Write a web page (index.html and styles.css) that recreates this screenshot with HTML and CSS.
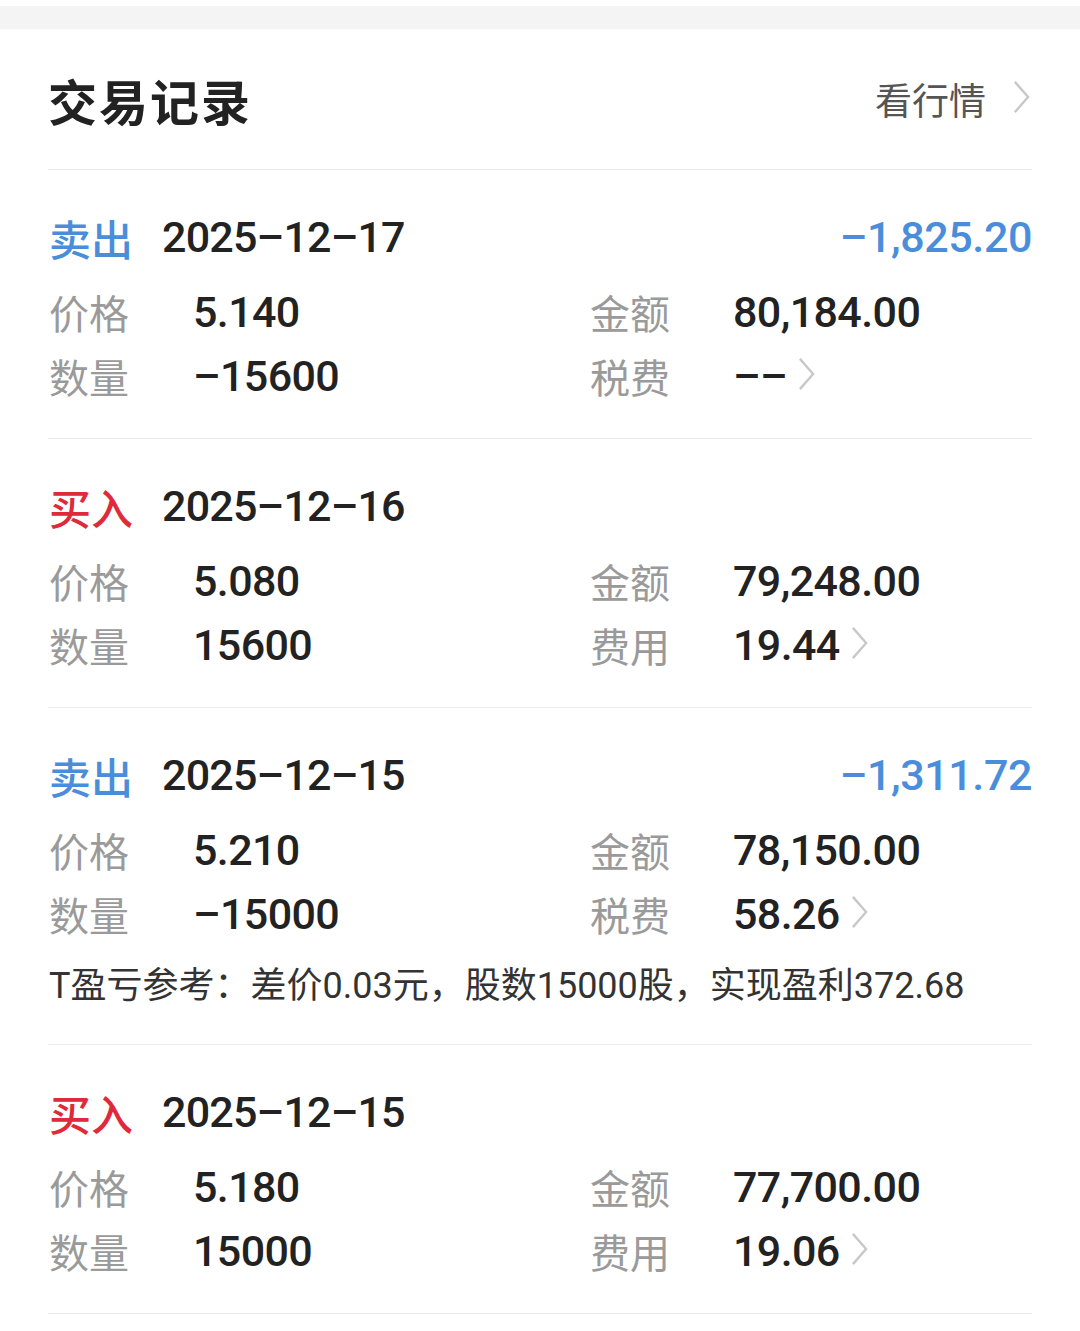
FILE: index.html
```html
<!DOCTYPE html>
<html lang="zh-CN">
<head>
  <meta charset="UTF-8" />
  <title>交易记录</title>
  <link rel="stylesheet" href="styles.css">
</head>
<body>
  <div class="topbar"></div>

  <div class="header">
    <h1 class="title">交易记录</h1>
    <a class="more">看行情
      <svg class="chev big" viewBox="0 0 20 36"><polyline points="3,2 17,18 3,34" /></svg>
    </a>
  </div>

  <div class="list">
    <div class="trade">
      <div class="trade-head">
        <span class="type sell">卖出</span>
        <span class="date">2025–12–17</span>
        <span class="profit sell">–1,825.20</span>
      </div>
      <div class="grid">
        <span class="label">价格</span><span class="val">5.140</span>
        <span class="label">金额</span><span class="val">80,184.00</span>
        <span class="label">数量</span><span class="val">–15600</span>
        <span class="label">税费</span><span class="val">––<svg class="chev" viewBox="0 0 20 36"><polyline points="3,2 17,18 3,34" /></svg></span>
      </div>
    </div>

    <div class="trade">
      <div class="trade-head">
        <span class="type buy">买入</span>
        <span class="date">2025–12–16</span>
      </div>
      <div class="grid">
        <span class="label">价格</span><span class="val">5.080</span>
        <span class="label">金额</span><span class="val">79,248.00</span>
        <span class="label">数量</span><span class="val">15600</span>
        <span class="label">费用</span><span class="val">19.44<svg class="chev" viewBox="0 0 20 36"><polyline points="3,2 17,18 3,34" /></svg></span>
      </div>
    </div>

    <div class="trade">
      <div class="trade-head">
        <span class="type sell">卖出</span>
        <span class="date">2025–12–15</span>
        <span class="profit sell">–1,311.72</span>
      </div>
      <div class="grid">
        <span class="label">价格</span><span class="val">5.210</span>
        <span class="label">金额</span><span class="val">78,150.00</span>
        <span class="label">数量</span><span class="val">–15000</span>
        <span class="label">税费</span><span class="val">58.26<svg class="chev" viewBox="0 0 20 36"><polyline points="3,2 17,18 3,34" /></svg></span>
      </div>
      <div class="note">T盈亏参考：差价0.03元，股数15000股，实现盈利372.68</div>
    </div>

    <div class="trade">
      <div class="trade-head">
        <span class="type buy">买入</span>
        <span class="date">2025–12–15</span>
      </div>
      <div class="grid">
        <span class="label">价格</span><span class="val">5.180</span>
        <span class="label">金额</span><span class="val">77,700.00</span>
        <span class="label">数量</span><span class="val">15000</span>
        <span class="label">费用</span><span class="val">19.06<svg class="chev" viewBox="0 0 20 36"><polyline points="3,2 17,18 3,34" /></svg></span>
      </div>
    </div>
  </div>
</body>
</html>
```

FILE: styles.css
```css
* { box-sizing: border-box; }
html, body {
  margin: 0;
  padding: 0;
  background: #fff;
  font-family: Roboto, "Noto Sans CJK SC", sans-serif;
  color: #222;
}
.topbar {
  margin-top: 6px;
  height: 23px;
  background: #f4f4f4;
}
.header {
  display: flex;
  align-items: center;
  justify-content: space-between;
  height: 141px;
  margin: 0 48px;
  border-bottom: 1px solid #ececec;
}
.title {
  margin: 0;
  font-size: 49px;
  font-weight: 700;
  color: #222;
  letter-spacing: 2px;
}
.more {
  display: flex;
  align-items: center;
  font-size: 37px;
  color: #555;
}
.chev {
  width: 19px;
  height: 34px;
  margin-left: 10px;
  vertical-align: middle;
  position: relative;
  top: -2px;
}
.chev polyline {
  fill: none;
  stroke: #c8c8c8;
  stroke-width: 2.5;
}
.chev.big {
  margin-left: 26px;
  margin-right: 1px;
  top: -2px;
}
.list {
  padding: 0 48px;
}
.trade {
  border-bottom: 1px solid #ececec;
  padding: 35px 0 30px 1px;
}
.trade-head {
  display: flex;
  align-items: center;
  height: 64px;
  margin-bottom: 11px;
}
.type {
  font-size: 42px;
  font-weight: 500;
  margin-right: 29px;
}
.sell { color: #4a8edb; }
.buy { color: #e02a3a; }
.date {
  font-size: 43px;
  font-weight: 500;
  color: #222;
  letter-spacing: -0.8px;
}
.profit {
  margin-left: auto;
  font-size: 43px;
  font-weight: 500;
  letter-spacing: -0.4px;
}
.grid {
  display: grid;
  grid-template-columns: 144px 397px 143px 1fr;
  grid-auto-rows: 64px;
  align-items: center;
}
.label {
  font-size: 40px;
  color: #9a9a9a;
}
.val {
  display: flex;
  align-items: center;
  font-size: 43px;
  font-weight: 500;
  color: #222;
  letter-spacing: -0.6px;
}
.note {
  margin-top: 16px;
  margin-bottom: 4px;
  line-height: 48px;
  font-size: 36px;
  color: #333;
  white-space: nowrap;
}
```
